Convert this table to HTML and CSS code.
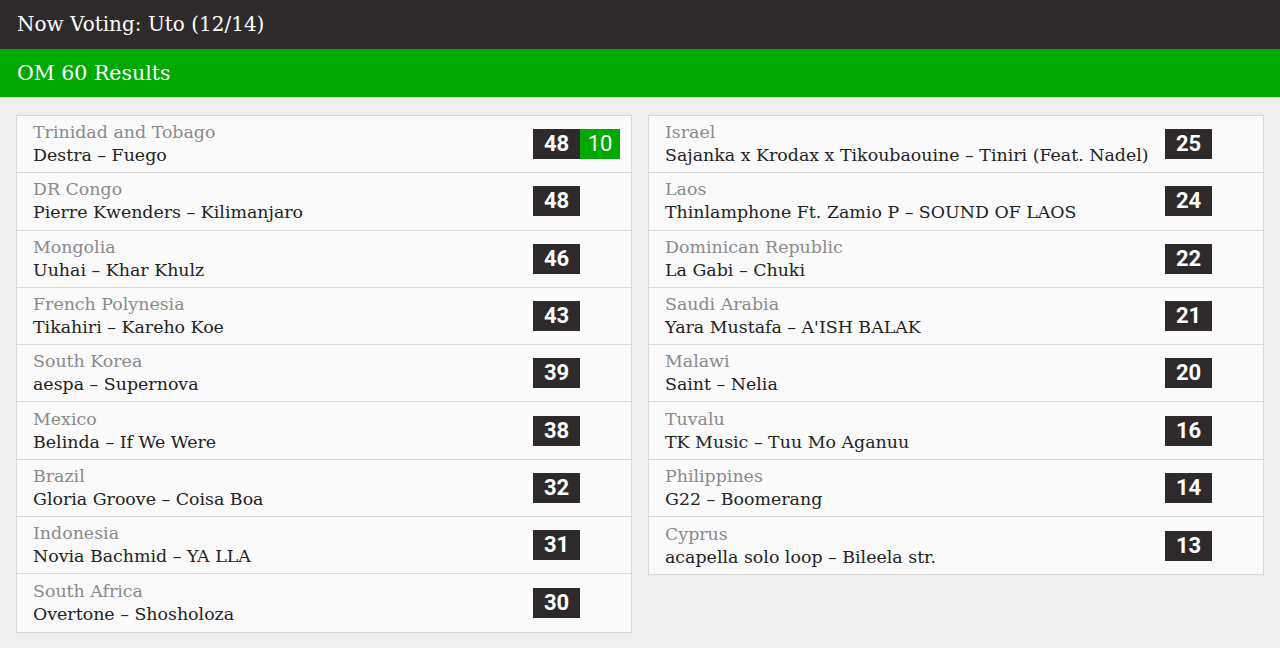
FILE: index.html
```html
<!DOCTYPE html>
<html>
<head>
<meta charset="utf-8">
<link rel="stylesheet" href="styles.css">
</head>
<body>
<header class="topbar">Now Voting: Uto (12/14)</header>
<div class="subbar">OM 60 Results</div>
<main class="columns">
  <section class="panel">
    <div class="row"><div class="info"><div class="country">Trinidad and Tobago</div><div class="song">Destra – Fuego</div></div><div class="score"><span class="pts">48</span><span class="pts green">10</span></div></div>
    <div class="row"><div class="info"><div class="country">DR Congo</div><div class="song">Pierre Kwenders – Kilimanjaro</div></div><div class="score"><span class="pts">48</span></div></div>
    <div class="row"><div class="info"><div class="country">Mongolia</div><div class="song">Uuhai – Khar Khulz</div></div><div class="score"><span class="pts">46</span></div></div>
    <div class="row"><div class="info"><div class="country">French Polynesia</div><div class="song">Tikahiri – Kareho Koe</div></div><div class="score"><span class="pts">43</span></div></div>
    <div class="row"><div class="info"><div class="country">South Korea</div><div class="song">aespa – Supernova</div></div><div class="score"><span class="pts">39</span></div></div>
    <div class="row"><div class="info"><div class="country">Mexico</div><div class="song">Belinda – If We Were</div></div><div class="score"><span class="pts">38</span></div></div>
    <div class="row"><div class="info"><div class="country">Brazil</div><div class="song">Gloria Groove – Coisa Boa</div></div><div class="score"><span class="pts">32</span></div></div>
    <div class="row"><div class="info"><div class="country">Indonesia</div><div class="song">Novia Bachmid – YA LLA</div></div><div class="score"><span class="pts">31</span></div></div>
    <div class="row"><div class="info"><div class="country">South Africa</div><div class="song">Overtone – Shosholoza</div></div><div class="score"><span class="pts">30</span></div></div>
  </section>
  <section class="panel">
    <div class="row"><div class="info"><div class="country">Israel</div><div class="song">Sajanka x Krodax x Tikoubaouine – Tiniri (Feat. Nadel)</div></div><div class="score"><span class="pts">25</span></div></div>
    <div class="row"><div class="info"><div class="country">Laos</div><div class="song">Thinlamphone Ft. Zamio P – SOUND OF LAOS</div></div><div class="score"><span class="pts">24</span></div></div>
    <div class="row"><div class="info"><div class="country">Dominican Republic</div><div class="song">La Gabi – Chuki</div></div><div class="score"><span class="pts">22</span></div></div>
    <div class="row"><div class="info"><div class="country">Saudi Arabia</div><div class="song">Yara Mustafa – A'ISH BALAK</div></div><div class="score"><span class="pts">21</span></div></div>
    <div class="row"><div class="info"><div class="country">Malawi</div><div class="song">Saint – Nelia</div></div><div class="score"><span class="pts">20</span></div></div>
    <div class="row"><div class="info"><div class="country">Tuvalu</div><div class="song">TK Music – Tuu Mo Aganuu</div></div><div class="score"><span class="pts">16</span></div></div>
    <div class="row"><div class="info"><div class="country">Philippines</div><div class="song">G22 – Boomerang</div></div><div class="score"><span class="pts">14</span></div></div>
    <div class="row"><div class="info"><div class="country">Cyprus</div><div class="song">acapella solo loop – Bileela str.</div></div><div class="score"><span class="pts">13</span></div></div>
  </section>
</main>
</body>
</html>
```

FILE: styles.css
```css
* { box-sizing: border-box; }
html, body { margin: 0; padding: 0; }
body {
  background: #eeeeee;
  font-family: "DejaVu Serif", serif;
  color: #222;
  width: 1280px;
  height: 648px;
  overflow: hidden;
}
.topbar {
  background: #2e2a2b;
  color: #fff;
  height: 49px;
  line-height: 49px;
  padding-left: 17px;
  font-size: 20px;
}
.subbar {
  background: #00a800;
  color: #fff;
  height: 49px;
  line-height: 49px;
  padding-left: 17px;
  font-size: 20.5px;
  border-bottom: 1px solid #bfe6bf;
}
.columns {
  display: flex;
  align-items: flex-start;
  gap: 16px;
  padding: 17px 16px;
}
.panel {
  flex: 1;
  background: #fafafa;
  border: 1px solid #d9d9d9;
}
.row {
  display: flex;
  align-items: center;
  height: 57.3px;
  padding: 0 11px 0 16px;
  border-bottom: 1px solid #dcdcdc;
}
.row:last-child { border-bottom: none; }
.info { flex: 1; min-width: 0; }
.country {
  color: #8a8a8a;
  font-size: 17.4px;
  line-height: 23px;
  white-space: nowrap;
}
.song {
  color: #222;
  font-size: 17.4px;
  line-height: 23px;
  white-space: nowrap;
}
.score {
  width: 87px;
  display: flex;
  flex: none;
}
.pts {
  display: inline-block;
  width: 47px;
  height: 30px;
  line-height: 30px;
  text-align: center;
  background: #2e2a2b;
  color: #fff;
  font-family: "Roboto", sans-serif;
  font-weight: 700;
  font-size: 22px;
}
.pts.green {
  width: 40px;
  background: #00a800;
  font-weight: 400;
}
```
